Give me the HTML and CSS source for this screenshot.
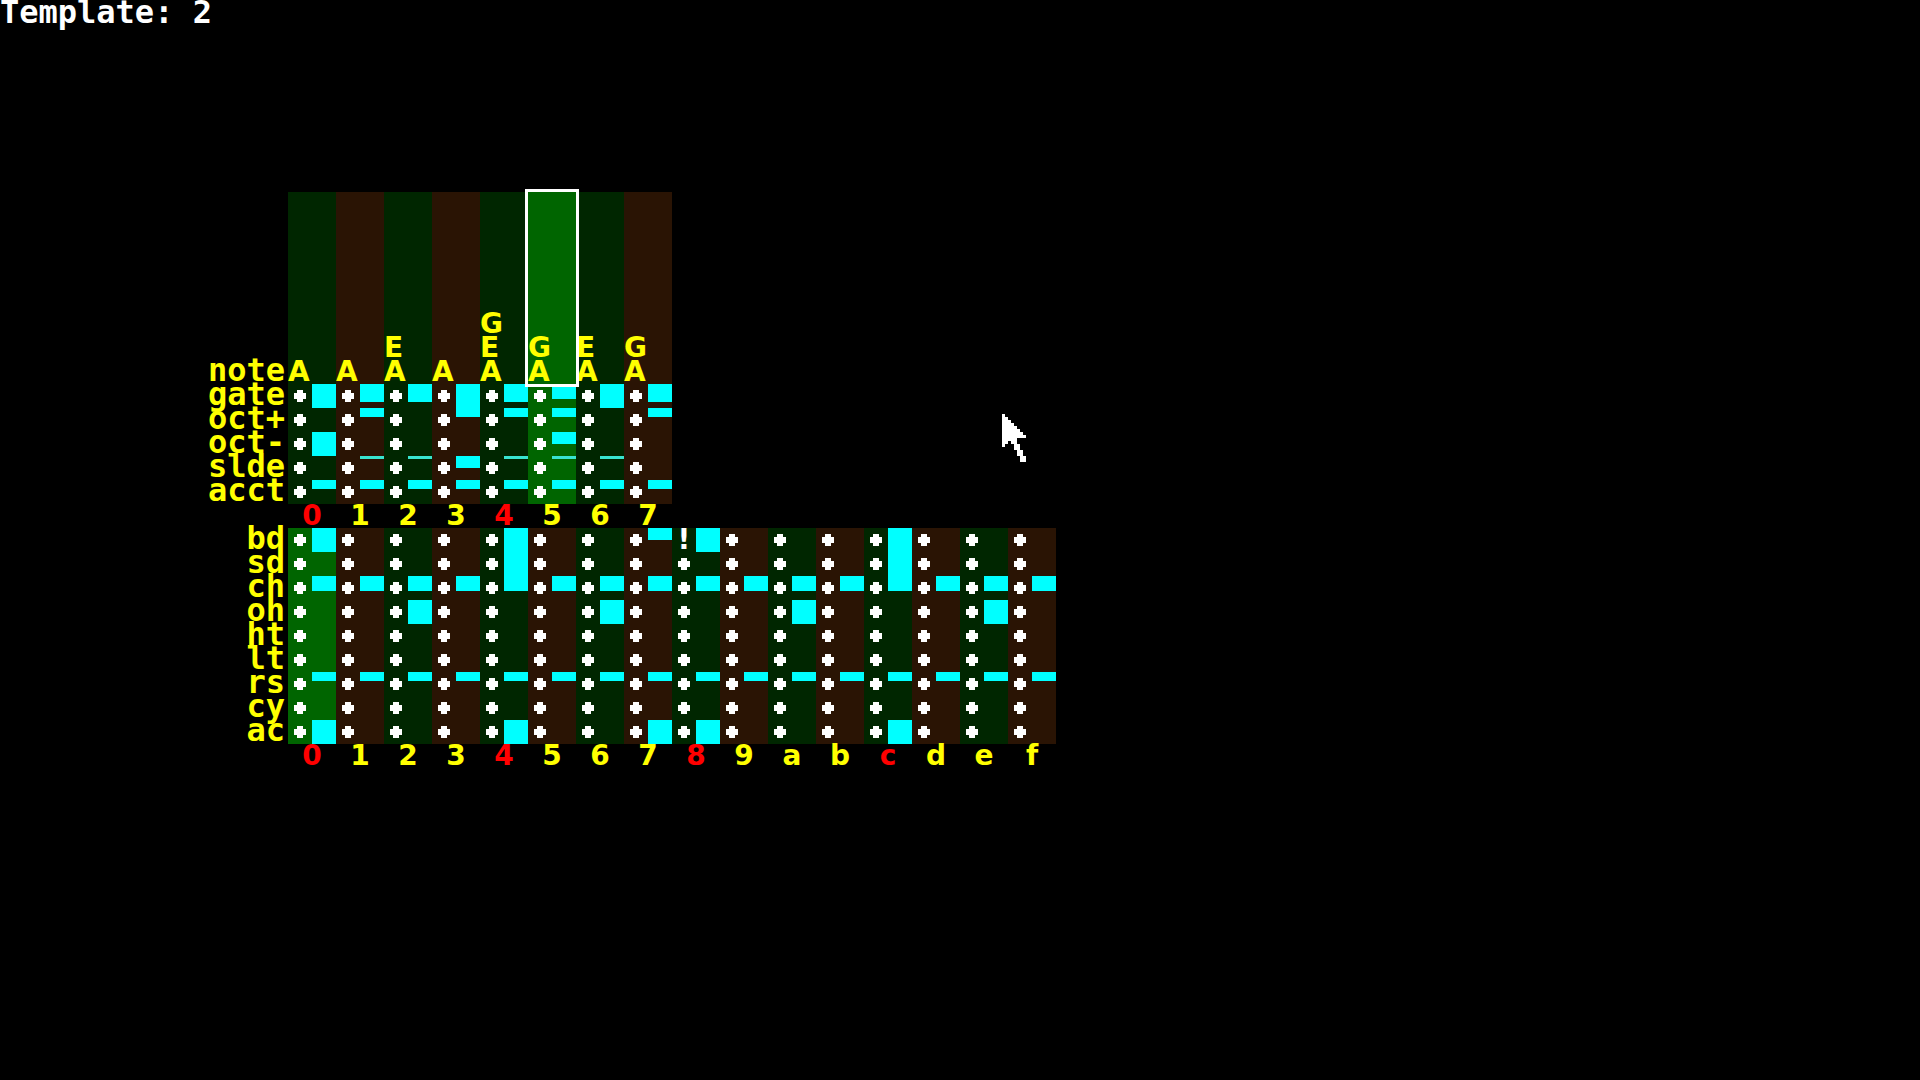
FILE: index.html
```
<!DOCTYPE html>
<html lang="en">
<head>
<meta charset="utf-8">
<title>Template: 2</title>
<meta name="viewport" content="width=device-width, initial-scale=1">
<link rel="stylesheet" href="styles.css">
</head>
<body>

<h1 class="title">Template: 2</h1>

<main class="patterns">
	<table class="pattern" id="synth"></table>
	<table class="pattern" id="drums"></table>
</main>

<svg class="pointer" viewBox="0 0 8 16" shape-rendering="crispEdges">
	<path fill="#fff" d="M0 0H1V1H2V2H3V3H4V4H5V5H6V6H7V7H8V8H5V10H6V12H7V14H8V16H6V14H5V12H4V10H3V9H2V10H1V11H0Z"/>
</svg>

<script src="script.js"></script>
</body>
</html>
```

FILE: styles.css
```
body {
	margin: 0;
	background: #000;
	color: #ff0;
	font: bold 28px/24px "DejaVu Sans", sans-serif;
}

.title {
	margin: 0;
	color: #fff;
	font: bold 32px/24px "DejaVu Sans Mono", monospace;
}

.patterns {
	padding: 168px 0 0 192px;
}

.pattern {
	border-collapse: collapse;
	table-layout: fixed;
	width: 0;
}

.pattern th,
.pattern td {
	width: 48px;
	height: 24px;
	padding: 0;
	vertical-align: top;
}

.pattern .label {
	box-sizing: border-box;
	width: 96px;
	padding-right: 3px;
	text-align: right;
	vertical-align: bottom;
	font: bold 32px/20px "DejaVu Sans Mono", monospace;
}

.label span {
	display: block;
	height: 24px;
}

.number {
	text-align: center;
}

.beat {
	color: #f00;
}

.even {
	background: #002600;
}

.odd {
	background: #2a1404;
}

.active {
	background: #006500;
}

.pattern .notes {
	height: 192px;
	vertical-align: bottom;
}

.notes span {
	display: block;
	height: 24px;
}

.selected {
	position: relative;
	outline: 3px solid #fff;
}

.step {
	display: grid;
	grid-template-columns: 24px 24px;
	height: 24px;
}

.dot {
	width: 12px;
	height: 12px;
	place-self: center;
	background: #fff;
	clip-path: polygon(25% 0, 75% 0, 75% 25%, 100% 25%, 100% 75%, 75% 75%, 75% 100%, 25% 100%, 25% 75%, 0 75%, 0 25%, 25% 25%);
}

.trigger {
	color: #fff;
	text-align: center;
}

.bar {
	background: #0ff;
}

.bar.low {
	background: #38e4d0;
}

.pointer {
	position: absolute;
	left: 1002px;
	top: 414px;
	width: 24px;
	height: 48px;
}
```

FILE: script.js
```
// notes are listed top to bottom, levels are 0 (off) to 8 (full)
var synth = {
	steps: 8,
	active: 5,
	selected: 5,
	notes: ["A", "A", "EA", "A", "GEA", "GA", "EA", "GA"],
	rows: {
		"gate": [8,6,6,8,6,5,8,6],
		"oct+": [0,3,0,3,3,3,0,3],
		"oct-": [8,0,0,0,0,4,0,0],
		"slde": [0,1,1,4,1,1,1,0],
		"acct": [3,3,3,3,3,3,3,3]
	}
};

var drums = {
	steps: 16,
	active: 0,
	trigger: {"bd": 8},
	rows: {
		"bd": [8,0,0,0,8,0,0,4,8,0,0,0,8,0,0,0],
		"sd": [0,0,0,0,8,0,0,0,0,0,0,0,8,0,0,0],
		"ch": [5,5,5,5,5,5,5,5,5,5,5,5,5,5,5,5],
		"oh": [0,0,8,0,0,0,8,0,0,0,8,0,0,0,8,0],
		"ht": [0,0,0,0,0,0,0,0,0,0,0,0,0,0,0,0],
		"lt": [0,0,0,0,0,0,0,0,0,0,0,0,0,0,0,0],
		"rs": [3,3,3,3,3,3,3,3,3,3,3,3,3,3,3,3],
		"cy": [0,0,0,0,0,0,0,0,0,0,0,0,0,0,0,0],
		"ac": [8,0,0,0,8,0,0,8,8,0,0,0,8,0,0,0]
	}
};

function shade(p, i) {
	if (i == p.active) return "active";
	return i % 2 ? "odd" : "even";
}

function label(name) {
	return '<th class="label" scope="row"><span>' + name + '</span></th>';
}

function draw(id, p) {
	var html = "<tbody>";
	var i;

	if (p.notes) {
		html += "<tr>" + label("note");
		for (i = 0; i < p.steps; i++) {
			html += '<td class="notes ' + shade(p, i) + (i == p.selected ? " selected" : "") + '">';
			html += p.notes[i].split("").map(function(n) { return "<span>" + n + "</span>"; }).join("");
			html += "</td>";
		}
		html += "</tr>";
	}

	for (var name in p.rows) {
		html += "<tr>" + label(name);
		for (i = 0; i < p.steps; i++) {
			var level = p.rows[name][i];
			var hit = p.trigger && p.trigger[name] === i;
			html += '<td class="' + shade(p, i) + '"><div class="step">';
			html += hit ? '<span class="trigger">!</span>' : '<span class="dot"></span>';
			if (level) html += '<span class="bar' + (level == 1 ? " low" : "") + '" style="height:' + level * 3 + 'px"></span>';
			html += "</div></td>";
		}
		html += "</tr>";
	}

	// step numbers in hex, every fourth one is a beat
	html += '</tbody><tfoot><tr><td class="label"></td>';
	for (i = 0; i < p.steps; i++) {
		html += '<th scope="col" class="number' + (i % 4 ? "" : " beat") + '">' + i.toString(16) + "</th>";
	}
	html += "</tr></tfoot>";

	document.getElementById(id).innerHTML = html;
}

draw("synth", synth);
draw("drums", drums);
```
